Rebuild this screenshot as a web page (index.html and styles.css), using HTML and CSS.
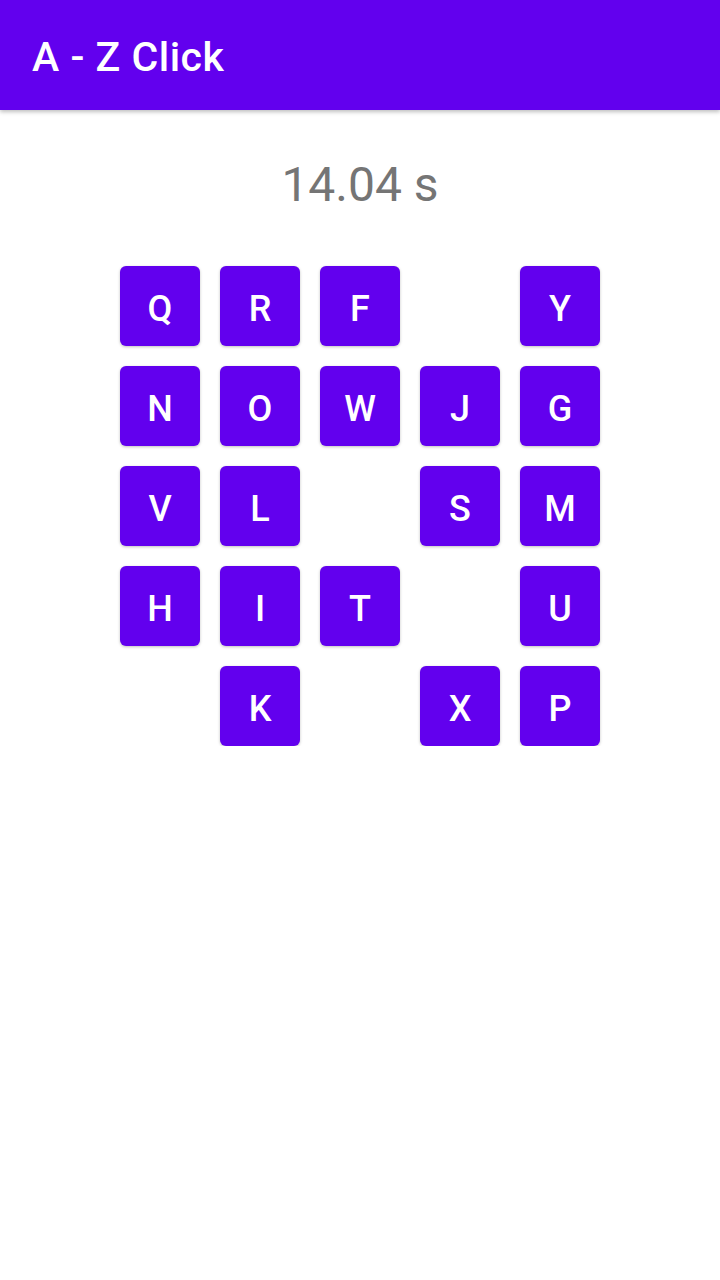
FILE: index.html
```html
<!DOCTYPE html>
<html>
<head>
<meta charset="utf-8">
<link rel="stylesheet" href="styles.css">
</head>
<body>
<header class="appbar"><h1 class="title">A - Z Click</h1></header>
<main class="content">
  <div class="timer">14.04 s</div>
  <div class="grid">
    <button class="key">Q</button><button class="key">R</button><button class="key">F</button><span class="gap"></span><button class="key">Y</button>
    <button class="key">N</button><button class="key">O</button><button class="key">W</button><button class="key">J</button><button class="key">G</button>
    <button class="key">V</button><button class="key">L</button><span class="gap"></span><button class="key">S</button><button class="key">M</button>
    <button class="key">H</button><button class="key">I</button><button class="key">T</button><span class="gap"></span><button class="key">U</button>
    <span class="gap"></span><button class="key">K</button><span class="gap"></span><button class="key">X</button><button class="key">P</button>
  </div>
</main>
</body>
</html>
```
FILE: styles.css
```css
html, body {
  margin: 0;
  padding: 0;
  background: #ffffff;
  font-family: Roboto, "Liberation Sans", sans-serif;
}
.appbar {
  height: 110px;
  box-sizing: border-box;
  background: #6200ee;
  display: flex;
  align-items: center;
  padding: 4px 32px 0;
  box-shadow: 0 2px 4px rgba(0,0,0,0.25);
  position: relative;
}
.title {
  margin: 0;
  color: #ffffff;
  font-size: 41px;
  font-weight: 500;
  line-height: 48px;
  letter-spacing: 0.5px;
}
.content {
  display: flex;
  flex-direction: column;
  align-items: center;
}
.timer {
  margin-top: 47px;
  font-size: 48px;
  line-height: 56px;
  color: #757575;
  font-weight: 400;
}
.grid {
  margin-top: 53px;
  display: grid;
  grid-template-columns: repeat(5, 80px);
  grid-auto-rows: 80px;
  gap: 20px;
}
.key {
  border: none;
  margin: 0;
  padding: 6px 0 0;
  box-sizing: border-box;
  background: #6200ee;
  color: #ffffff;
  border-radius: 6px;
  font-family: Roboto, "Liberation Sans", sans-serif;
  font-size: 36px;
  font-weight: 500;
  box-shadow: 0 1px 3px rgba(0,0,0,0.25);
  display: flex;
  align-items: center;
  justify-content: center;
}
```
